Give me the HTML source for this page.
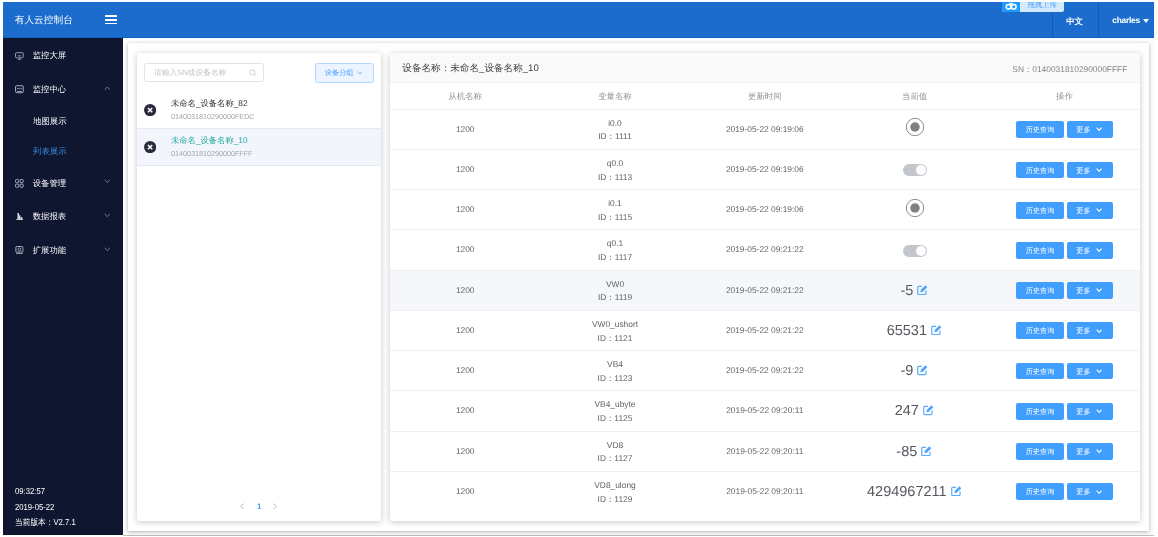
<!DOCTYPE html>
<html lang="zh">
<head>
<meta charset="utf-8">
<title>有人云控制台</title>
<style>
*{box-sizing:border-box;margin:0;padding:0}
html,body{width:1158px;height:537px;overflow:hidden;background:#fff}
body{font-family:"Liberation Sans",sans-serif;position:relative;color:#606266;text-rendering:geometricPrecision}
.abs{position:absolute}
.nw{white-space:nowrap}
#frame{position:absolute;left:3px;top:2px;width:1151px;height:534.3px;background:#fdfdfd;overflow:hidden;will-change:transform}
/* header */
#hdr{position:absolute;left:0;top:0;width:1151px;height:36.4px;z-index:2;background:#1b6ccd;border-bottom:1.2px solid #0f5fc4}
#hdr .title{position:absolute;left:11.7px;top:0;height:36.2px;line-height:37px;font-size:9.7px;color:#fff;white-space:nowrap}
#hdr .burger{position:absolute;left:102px;top:13.3px;width:12px;height:9.4px}
#hdr .burger i{position:absolute;left:0;width:12px;height:1.6px;background:#fff;border-radius:.5px}
#hdr .vline{position:absolute;width:1px;background:#1558ad}
#hdr .lang{position:absolute;left:1048.5px;top:0;width:46px;height:36.2px;line-height:38.2px;text-align:center;color:#fff;font-size:8.4px;font-weight:bold;white-space:nowrap}
#hdr .user{position:absolute;left:1109.3px;top:0;height:36.2px;line-height:37.2px;color:#fff;font-size:8.5px;font-weight:bold;white-space:nowrap;letter-spacing:-.3px}
#hdr .tri{position:absolute;left:1140px;top:17px;width:0;height:0;border-left:3.3px solid transparent;border-right:3.3px solid transparent;border-top:4.2px solid #fff}
#up{position:absolute;left:999px;top:-3px;width:62px;height:12.7px;border-radius:0 0 2px 2px;overflow:hidden;background:#d3eaff}
#up .ic{position:absolute;left:0;top:0;width:18.2px;height:12.7px;background:#1d9bff}
#up .tx{position:absolute;left:18.2px;top:-.5px;width:43.8px;text-align:center;font-size:7.3px;line-height:12px;color:#4a9ff0;white-space:nowrap}
/* sidebar */
#side{position:absolute;left:0;top:36.2px;width:119.7px;height:497.2px;background:#0e1630}
.mi{position:absolute;left:0;width:119.7px;height:33.7px;line-height:34.8px;color:#fff;font-size:8.4px;white-space:nowrap}
.mi .t{position:absolute;left:29.7px;top:0}
.mi svg.ic{position:absolute;left:11.8px;top:13.2px;width:8.8px;height:8.8px}
.mi svg.ar{position:absolute;left:100.6px;top:13.8px;width:6.6px;height:4.6px}
.smi{position:absolute;left:30px;height:30px;line-height:30.4px;color:#fff;font-size:8.4px;white-space:nowrap}
.smi.on{color:#3a8ee6}
.foot{position:absolute;margin-top:.5px;left:11.9px;color:#fff;font-size:8.7px;line-height:15px;white-space:nowrap;transform:scaleX(.885);transform-origin:0 50%}
/* main */
#wrap{position:absolute;left:124.7px;top:41.1px;width:1021.8px;height:487.7px;background:#fff;box-shadow:0 1px 4px rgba(0,0,0,.3)}
.card{position:absolute;background:#fff;box-shadow:0 1px 6px rgba(0,0,0,.23);border-radius:2px}
#lp{left:134.2px;top:50.7px;width:243.6px;height:468.3px}
#rp{left:387.3px;top:50.7px;width:749.4px;height:468.3px}
/* left panel */
.inp{position:absolute;left:7.3px;top:10.4px;width:119.6px;height:19.2px;border:1px solid #dfe2e8;border-radius:2.4px;background:#fff}
.inp .ph{position:absolute;left:8.6px;top:0;line-height:17.6px;font-size:7.7px;color:#c0c4cc;white-space:nowrap}
.inp svg{position:absolute;left:104px;top:5.1px;width:8px;height:8px}
.gbtn{position:absolute;left:178px;top:10.1px;width:58.4px;height:20.2px;border:1px solid #b3d8ff;background:#ecf5ff;border-radius:2.4px;color:#409eff;font-size:7.2px;line-height:18.6px;white-space:nowrap}
.gbtn .t{position:absolute;left:8.6px;top:0}
.gbtn svg{position:absolute;left:40.4px;top:7.4px;width:6px;height:4px}
.dev{position:absolute;left:0;width:243.6px;height:37px;border-bottom:1px solid #e6e9ef}
.dev.sel{background:#f2f6fc}
.dev svg{position:absolute;left:6.9px;top:12.4px;width:12.2px;height:12.2px}
.dev .n{position:absolute;left:33.8px;top:5px;font-size:8.3px;line-height:12px;color:#303133;white-space:nowrap}
.dev.sel .n{color:#25a89c}
.dev .s{position:absolute;left:33.8px;top:19.6px;font-size:7.2px;line-height:12px;color:#a3a6ad;white-space:nowrap}
.pg{position:absolute;top:447.3px;font-size:8px;line-height:14px;text-align:center;width:12px;white-space:nowrap}
/* right panel */
.rh{position:absolute;left:0;top:0;width:749.4px;height:30.8px;background:#fafafa;border-bottom:1px solid #f0f2f6;border-radius:2px 2px 0 0}
.rh .a{position:absolute;left:12px;top:0;line-height:31px;font-size:9.6px;color:#444;white-space:nowrap}
.rh .b{position:absolute;right:12.4px;top:0;line-height:32px;font-size:8.4px;color:#7f8288;white-space:nowrap}
.th{position:absolute;top:30.8px;height:26.2px;line-height:26.6px;font-size:8.4px;color:#909399;text-align:center;width:149.8px;white-space:nowrap}
.hl{position:absolute;left:0;width:749.4px;height:1px;background:#eef0f6}
.row{position:absolute;left:0;width:749.4px;height:40.23px;border-bottom:1px solid #eef0f6}
.row.hv{background:#f5f7fa}
.c{position:absolute;top:0;height:40.23px;width:149.8px;text-align:center;font-size:8.4px;color:#606266;white-space:nowrap}
.c1{left:0;line-height:39.4px}
.c2{left:149.8px;line-height:13.8px;padding-top:7px}
.c3{left:299.6px;line-height:39.4px}
.c4{left:449.4px}
.c5{left:599.2px}
.b1,.b2{position:absolute;top:11.6px;height:16.8px;background:#409eff;border-radius:2px;color:#fff;font-size:7.2px;line-height:17px;text-align:center;white-space:nowrap}
.b1{left:26.7px;width:47.7px}
.b2{left:77.2px;width:46.2px;text-align:left;padding-left:9.6px}
.b2 svg{position:absolute;left:29.4px;top:6.2px;width:6.3px;height:4.4px}
.radio{position:absolute;left:65.1px;top:7.5px;width:20px;height:20px}
.sw{position:absolute;left:63px;top:14.4px;width:24px;height:12px;border-radius:6px;background:#c3c6cb}
.sw i{position:absolute;right:1.1px;top:1.1px;width:9.8px;height:9.8px;border-radius:50%;background:#fff}
.val{position:absolute;left:-.5px;top:0;width:149.8px;height:40.23px;line-height:41px;font-size:14.5px;color:#55585e;text-align:center;white-space:nowrap}
.val svg{display:inline-block;width:10.4px;height:10.4px;margin-left:4.1px;vertical-align:-.5px}
</style>
</head>
<body>
<div id="frame">
  <div id="hdr">
    <div class="title">有人云控制台</div>
    <div class="burger"><i style="top:0"></i><i style="top:3.8px"></i><i style="top:7.6px"></i></div>
    <div id="up"><div class="ic"><svg viewBox="0 0 18 12" width="18.2" height="12.7" style="position:absolute;left:0;top:0"><g fill="none" stroke="#fff" stroke-width="1.5"><circle cx="6.5" cy="7.4" r="2.3"/><circle cx="11.7" cy="7.4" r="2.3"/><path d="M7.4 5.2A2 2 0 0 1 10.8 5.2"/></g></svg></div><div class="tx">拖拽上传</div></div>
    <div class="vline" style="left:1049px;top:10px;height:26.2px"></div>
    <div class="vline" style="left:1095.2px;top:0;height:36.2px"></div>
    <div class="lang">中文</div>
    <div class="user">charles</div>
    <div class="tri"></div>
  </div>
  <div id="side">
    <div class="mi" style="top:.3px"><svg class="ic" viewBox="0 0 10 10"><rect x=".6" y=".8" width="8.8" height="5.8" rx="1.2" fill="none" stroke="#b9bdc9" stroke-width=".9"/><path d="M3.2 8.7h3.6M5 6.6v2M3 4.4h4" stroke="#b9bdc9" stroke-width=".8" fill="none"/></svg><span class="t">监控大屏</span></div>
    <div class="mi" style="top:33.7px"><svg class="ic" viewBox="0 0 10 10"><rect x=".6" y=".8" width="8.8" height="8" rx="1.4" fill="none" stroke="#b9bdc9" stroke-width="1"/><path d="M2 5l1.6-1.4L5 4.8l1.4-1.4L8 4.6M2.2 7.4h5.6" stroke="#b9bdc9" stroke-width=".9" fill="none"/></svg><span class="t">监控中心</span><svg class="ar" viewBox="0 0 10 7"><path d="M1 6l4-4.6L9 6" fill="none" stroke="#8a8fa0" stroke-width="1.2"/></svg></div>
    <div class="smi" style="top:67.4px">地图展示</div>
    <div class="smi on" style="top:97.4px">列表展示</div>
    <div class="mi" style="top:127.4px"><svg class="ic" viewBox="0 0 10 10"><g fill="none" stroke="#b9bdc9" stroke-width="1"><rect x=".6" y=".6" width="3.6" height="3.6" rx="1"/><rect x="5.8" y=".6" width="3.6" height="3.6" rx="1"/><rect x=".6" y="5.8" width="3.6" height="3.6" rx="1"/><rect x="5.8" y="5.8" width="3.6" height="3.6" rx="1"/></g></svg><span class="t">设备管理</span><svg class="ar" viewBox="0 0 10 7"><path d="M1 1l4 4.6L9 1" fill="none" stroke="#8a8fa0" stroke-width="1.2"/></svg></div>
    <div class="mi" style="top:161.1px"><svg class="ic" viewBox="0 0 10 10"><path d="M1.2 9.2h8V8.1H8.4V5.6H6.6v2.5H6.2V3.6H4.6V1H2.8v7.1H1.2z" fill="#d3d6df"/></svg><span class="t">数据报表</span><svg class="ar" viewBox="0 0 10 7"><path d="M1 1l4 4.6L9 1" fill="none" stroke="#8a8fa0" stroke-width="1.2"/></svg></div>
    <div class="mi" style="top:194.8px"><svg class="ic" viewBox="0 0 10 10"><rect x="1" y=".6" width="8" height="6.4" rx="1" fill="none" stroke="#b9bdc9" stroke-width="1"/><circle cx="5" cy="3.8" r="1.6" fill="none" stroke="#b9bdc9" stroke-width=".9"/><path d="M1.2 8.6h7.6" stroke="#b9bdc9" stroke-width=".9"/></svg><span class="t">扩展功能</span><svg class="ar" viewBox="0 0 10 7"><path d="M1 1l4 4.6L9 1" fill="none" stroke="#8a8fa0" stroke-width="1.2"/></svg></div>
    <div class="foot" style="top:445.8px">09:32:57</div>
    <div class="foot" style="top:461px">2019-05-22</div>
    <div class="foot" style="top:476px">当前版本：V2.7.1</div>
  </div>

  <div class="abs" style="left:119.7px;top:533.2px;width:1031.3px;height:1.1px;background:#bdbdbd"></div>
  <div id="wrap"></div>

  <div class="card" id="lp">
    <div class="inp"><span class="ph">请输入SN或设备名称</span><svg viewBox="0 0 10 10"><circle cx="4.3" cy="4.3" r="3.3" fill="none" stroke="#c0c4cc" stroke-width="1"/><path d="M6.8 6.8L9.4 9.4" stroke="#c0c4cc" stroke-width="1"/></svg></div>
    <div class="gbtn"><span class="t">设备分组</span><svg viewBox="0 0 10 7"><path d="M1 1l4 4.4L9 1" fill="none" stroke="#409eff" stroke-width="1.2"/></svg></div>
    <div class="dev" style="top:39px"><svg viewBox="0 0 12 12"><circle cx="6" cy="6" r="6" fill="#2b2b3f"/><path d="M3.9 3.9l4.2 4.2M8.1 3.9L3.9 8.1" stroke="#fff" stroke-width="1.5"/></svg><div class="n">未命名_设备名称_82</div><div class="s">0140031810290000FEDC</div></div>
    <div class="dev sel" style="top:76px"><svg viewBox="0 0 12 12"><circle cx="6" cy="6" r="6" fill="#2b2b3f"/><path d="M3.9 3.9l4.2 4.2M8.1 3.9L3.9 8.1" stroke="#fff" stroke-width="1.5"/></svg><div class="n">未命名_设备名称_10</div><div class="s">0140031810290000FFFF</div></div>
    <svg class="abs" style="left:103.2px;top:450.5px;width:4.2px;height:6.6px" viewBox="0 0 5 8"><path d="M4.3 .7L1 4l3.3 3.3" fill="none" stroke="#b4b8c0" stroke-width="1.2"/></svg>
    <div class="pg" style="left:116px;color:#409eff;font-weight:bold">1</div>
    <svg class="abs" style="left:136.2px;top:450.5px;width:4.2px;height:6.6px" viewBox="0 0 5 8"><path d="M.7 .7L4 4 .7 7.3" fill="none" stroke="#b4b8c0" stroke-width="1.2"/></svg>
  </div>

  <div class="card" id="rp">
    <div class="rh"><span class="a">设备名称：未命名_设备名称_10</span><span class="b">SN：0140031810290000FFFF</span></div>
    <div class="th" style="left:0">从机名称</div>
    <div class="th" style="left:149.8px">变量名称</div>
    <div class="th" style="left:299.6px">更新时间</div>
    <div class="th" style="left:449.4px">当前值</div>
    <div class="th" style="left:599.2px">操作</div>
    <div class="hl" style="top:56.6px"></div>

    <div class="row" style="top:57px"><div class="c c1">1200</div><div class="c c2">i0.0<br>ID：1111</div><div class="c c3">2019-05-22 09:19:06</div><div class="c c4"><svg class="radio" viewBox="0 0 20 20"><circle cx="10" cy="10" r="8.7" fill="#fff" stroke="#8e8e8e" stroke-width="1"/><circle cx="10" cy="10" r="4.75" fill="#808080"/></svg></div><div class="c c5"><span class="b1">历史查询</span><span class="b2">更多<svg viewBox="0 0 10 7"><path d="M1 1l4 4.4L9 1" fill="none" stroke="#fff" stroke-width="1.6"/></svg></span></div></div>
    <div class="row" style="top:97.23px"><div class="c c1">1200</div><div class="c c2">q0.0<br>ID：1113</div><div class="c c3">2019-05-22 09:19:06</div><div class="c c4"><span class="sw"><i></i></span></div><div class="c c5"><span class="b1">历史查询</span><span class="b2">更多<svg viewBox="0 0 10 7"><path d="M1 1l4 4.4L9 1" fill="none" stroke="#fff" stroke-width="1.6"/></svg></span></div></div>
    <div class="row" style="top:137.46px"><div class="c c1">1200</div><div class="c c2">i0.1<br>ID：1115</div><div class="c c3">2019-05-22 09:19:06</div><div class="c c4"><svg class="radio" viewBox="0 0 20 20"><circle cx="10" cy="10" r="8.7" fill="#fff" stroke="#8e8e8e" stroke-width="1"/><circle cx="10" cy="10" r="4.75" fill="#808080"/></svg></div><div class="c c5"><span class="b1">历史查询</span><span class="b2">更多<svg viewBox="0 0 10 7"><path d="M1 1l4 4.4L9 1" fill="none" stroke="#fff" stroke-width="1.6"/></svg></span></div></div>
    <div class="row" style="top:177.69px"><div class="c c1">1200</div><div class="c c2">q0.1<br>ID：1117</div><div class="c c3">2019-05-22 09:21:22</div><div class="c c4"><span class="sw"><i></i></span></div><div class="c c5"><span class="b1">历史查询</span><span class="b2">更多<svg viewBox="0 0 10 7"><path d="M1 1l4 4.4L9 1" fill="none" stroke="#fff" stroke-width="1.6"/></svg></span></div></div>
    <div class="row hv" style="top:217.92px"><div class="c c1">1200</div><div class="c c2">VW0<br>ID：1119</div><div class="c c3">2019-05-22 09:21:22</div><div class="c c4"><span class="val">-5<svg viewBox="0 0 10 10"><path d="M4.7 1.3H1.7Q.7 1.3 .7 2.3v6q0 1 1 1h6q1 0 1-1V5.3" fill="none" stroke="#5aabff" stroke-width="1.15"/><path d="M8.1.3l1.8 1.8-4.3 4.3-2.4.6.6-2.4z" fill="#4ea3ff"/></svg></span></div><div class="c c5"><span class="b1">历史查询</span><span class="b2">更多<svg viewBox="0 0 10 7"><path d="M1 1l4 4.4L9 1" fill="none" stroke="#fff" stroke-width="1.6"/></svg></span></div></div>
    <div class="row" style="top:258.15px"><div class="c c1">1200</div><div class="c c2">VW0_ushort<br>ID：1121</div><div class="c c3">2019-05-22 09:21:22</div><div class="c c4"><span class="val">65531<svg viewBox="0 0 10 10"><path d="M4.7 1.3H1.7Q.7 1.3 .7 2.3v6q0 1 1 1h6q1 0 1-1V5.3" fill="none" stroke="#5aabff" stroke-width="1.15"/><path d="M8.1.3l1.8 1.8-4.3 4.3-2.4.6.6-2.4z" fill="#4ea3ff"/></svg></span></div><div class="c c5"><span class="b1">历史查询</span><span class="b2">更多<svg viewBox="0 0 10 7"><path d="M1 1l4 4.4L9 1" fill="none" stroke="#fff" stroke-width="1.6"/></svg></span></div></div>
    <div class="row" style="top:298.38px"><div class="c c1">1200</div><div class="c c2">VB4<br>ID：1123</div><div class="c c3">2019-05-22 09:21:22</div><div class="c c4"><span class="val">-9<svg viewBox="0 0 10 10"><path d="M4.7 1.3H1.7Q.7 1.3 .7 2.3v6q0 1 1 1h6q1 0 1-1V5.3" fill="none" stroke="#5aabff" stroke-width="1.15"/><path d="M8.1.3l1.8 1.8-4.3 4.3-2.4.6.6-2.4z" fill="#4ea3ff"/></svg></span></div><div class="c c5"><span class="b1">历史查询</span><span class="b2">更多<svg viewBox="0 0 10 7"><path d="M1 1l4 4.4L9 1" fill="none" stroke="#fff" stroke-width="1.6"/></svg></span></div></div>
    <div class="row" style="top:338.61px"><div class="c c1">1200</div><div class="c c2">VB4_ubyte<br>ID：1125</div><div class="c c3">2019-05-22 09:20:11</div><div class="c c4"><span class="val">247<svg viewBox="0 0 10 10"><path d="M4.7 1.3H1.7Q.7 1.3 .7 2.3v6q0 1 1 1h6q1 0 1-1V5.3" fill="none" stroke="#5aabff" stroke-width="1.15"/><path d="M8.1.3l1.8 1.8-4.3 4.3-2.4.6.6-2.4z" fill="#4ea3ff"/></svg></span></div><div class="c c5"><span class="b1">历史查询</span><span class="b2">更多<svg viewBox="0 0 10 7"><path d="M1 1l4 4.4L9 1" fill="none" stroke="#fff" stroke-width="1.6"/></svg></span></div></div>
    <div class="row" style="top:378.84px"><div class="c c1">1200</div><div class="c c2">VD8<br>ID：1127</div><div class="c c3">2019-05-22 09:20:11</div><div class="c c4"><span class="val">-85<svg viewBox="0 0 10 10"><path d="M4.7 1.3H1.7Q.7 1.3 .7 2.3v6q0 1 1 1h6q1 0 1-1V5.3" fill="none" stroke="#5aabff" stroke-width="1.15"/><path d="M8.1.3l1.8 1.8-4.3 4.3-2.4.6.6-2.4z" fill="#4ea3ff"/></svg></span></div><div class="c c5"><span class="b1">历史查询</span><span class="b2">更多<svg viewBox="0 0 10 7"><path d="M1 1l4 4.4L9 1" fill="none" stroke="#fff" stroke-width="1.6"/></svg></span></div></div>
    <div class="row" style="top:419.07px;border-bottom:none"><div class="c c1">1200</div><div class="c c2">VD8_ulong<br>ID：1129</div><div class="c c3">2019-05-22 09:20:11</div><div class="c c4"><span class="val">4294967211<svg viewBox="0 0 10 10"><path d="M4.7 1.3H1.7Q.7 1.3 .7 2.3v6q0 1 1 1h6q1 0 1-1V5.3" fill="none" stroke="#5aabff" stroke-width="1.15"/><path d="M8.1.3l1.8 1.8-4.3 4.3-2.4.6.6-2.4z" fill="#4ea3ff"/></svg></span></div><div class="c c5"><span class="b1">历史查询</span><span class="b2">更多<svg viewBox="0 0 10 7"><path d="M1 1l4 4.4L9 1" fill="none" stroke="#fff" stroke-width="1.6"/></svg></span></div></div>
  </div>
</div>
</body>
</html>
